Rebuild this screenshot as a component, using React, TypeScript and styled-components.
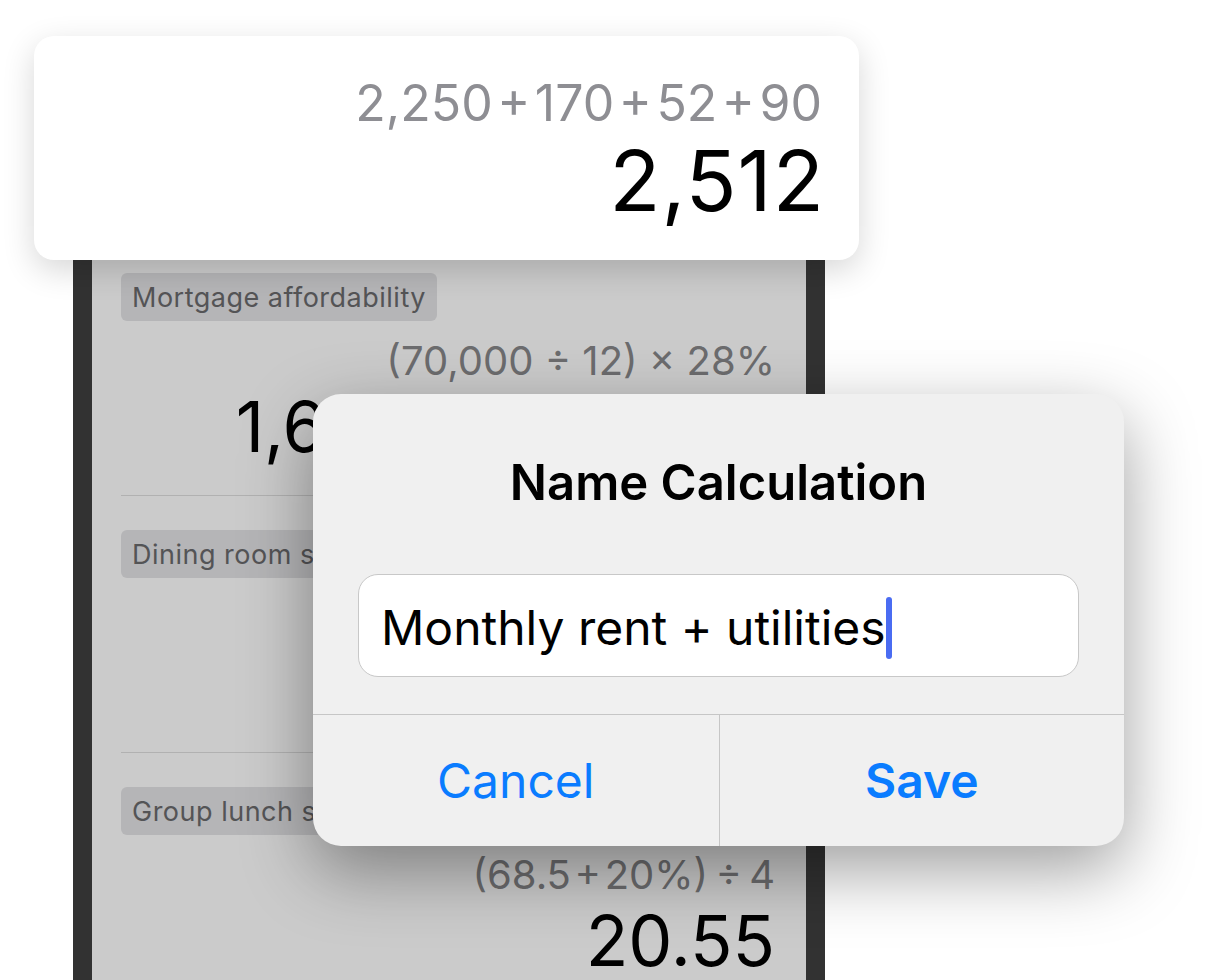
import styled, { createGlobalStyle } from "styled-components";

const GlobalStyle = createGlobalStyle`
  body {
    margin: 0;
    background: #ffffff;
    font-family: Inter, "Noto Sans", "Liberation Sans", sans-serif;
  }
`;

// narrow gaps around operators, like the calculator's own spacing
const H = "\u200A";
const T = "\u2009";

interface Calc {
  id: number;
  name: string;
  expression: string;
  result: string;
}

const calcs: Calc[] = [
  {
    id: 1,
    name: "Mortgage affordability",
    expression: "(70,000 ÷ 12) × 28%",
    result: "1,633.33333333",
  },
  {
    id: 2,
    name: "Dining room square footage",
    expression: "(14.5 × 12) + (10 × 8)",
    result: "254",
  },
  {
    id: 3,
    name: "Group lunch split",
    expression: `(68.5${H}+${H}20%)${T}÷${T}4`,
    result: "20.55",
  },
];

const Stage = styled.div`
  position: relative;
  width: 1206px;
  height: 980px;
  overflow: hidden;
  background: #ffffff;
`;

const Phone = styled.div`
  box-sizing: border-box;
  margin: 150px 0 0 73px;
  width: 752px;
  height: 830px;
  border-left: 19px solid #323232;
  border-right: 19px solid #323232;
  background: #cbcbcb;
  padding: 89px 34px 0 29px;
`;

const Row = styled.div`
  display: flex;
  flex-direction: column;
  padding: 34px 31px 29px 0;
  margin-right: -34px;
  border-bottom: 1px solid #b1b1b1;
`;

const Tag = styled.div`
  align-self: flex-start;
  height: 48px;
  display: flex;
  align-items: center;
  padding: 0 11px;
  border-radius: 6px;
  background: #b5b5b7;
  color: #545456;
  font-size: 27px;
  letter-spacing: 0.5px;
  white-space: nowrap;
`;

const Expression = styled.div<{ $size: number; $color: string }>`
  text-align: right;
  font-size: ${({ $size }) => $size}px;
  line-height: ${({ $size }) => Math.round($size * 1.2)}px;
  color: ${({ $color }) => $color};
  white-space: nowrap;
`;

const RowExpression = styled(Expression)`
  margin-top: 16px;
`;

const Result = styled.div<{ $size: number }>`
  text-align: right;
  font-size: ${({ $size }) => $size}px;
  line-height: ${({ $size }) => Math.round($size * 1.12)}px;
  color: #000000;
  white-space: nowrap;
`;

const RowResult = styled(Result)`
  margin-top: 3px;
`;

const Card = styled.div`
  position: absolute;
  left: 34px;
  top: 36px;
  width: 825px;
  height: 224px;
  box-sizing: border-box;
  padding: 37px 37px 0 0;
  border-radius: 20px;
  background: #ffffff;
  box-shadow: 0 10px 32px rgba(0, 0, 0, 0.16);
`;

const CardResult = styled(Result)`
  margin: 1px -3px 0 0;
  letter-spacing: 1px;
`;

const Dialog = styled.div`
  position: absolute;
  left: 313px;
  top: 394px;
  width: 811px;
  height: 452px;
  display: flex;
  flex-direction: column;
  border-radius: 28px;
  background: #f0f0f0;
  box-shadow: 0 24px 70px rgba(0, 0, 0, 0.38);
  overflow: hidden;
`;

const Title = styled.div`
  margin-top: 60px;
  text-align: center;
  font-size: 49px;
  line-height: 58px;
  font-weight: 600;
  color: #000000;
`;

const Field = styled.div`
  box-sizing: border-box;
  margin: 62px 45px 0;
  height: 103px;
  display: flex;
  align-items: center;
  padding: 4px 22px 0;
  background: #ffffff;
  border: 1.5px solid #c8c8c8;
  border-radius: 20px;
  font-size: 48px;
  line-height: 58px;
  color: #000000;
  white-space: nowrap;
`;

const Caret = styled.span`
  display: inline-block;
  width: 6px;
  height: 62px;
  border-radius: 3px;
  background: #4a6cf2;
`;

const Footer = styled.div`
  margin-top: 37px;
  flex: 1;
  display: grid;
  grid-template-columns: 1fr 1fr;
  border-top: 1px solid #c6c6c6;
`;

const Action = styled.div<{ $bold?: boolean }>`
  display: flex;
  align-items: center;
  justify-content: center;
  font-size: 48px;
  font-weight: ${({ $bold }) => ($bold ? 600 : 400)};
  color: #0a7cff;
  & + & {
    border-left: 1px solid #c6c6c6;
  }
`;

export default function App() {
  return (
    <Stage>
      <GlobalStyle />
      <Phone>
        {calcs.map((calc) => (
          <Row key={calc.id}>
            <Tag>{calc.name}</Tag>
            <RowExpression $size={40} $color="#6c6c6e">
              {calc.expression}
            </RowExpression>
            <RowResult $size={70}>{calc.result}</RowResult>
          </Row>
        ))}
      </Phone>

      <Card>
        <Expression $size={50} $color="#8e8e93">
          {`2,250${H}+${H}170${H}+${H}52${H}+${H}90`}
        </Expression>
        <CardResult $size={84}>2,512</CardResult>
      </Card>

      <Dialog>
        <Title>Name Calculation</Title>
        <Field>
          <span>Monthly rent + utilities</span>
          <Caret />
        </Field>
        <Footer>
          <Action>Cancel</Action>
          <Action $bold>Save</Action>
        </Footer>
      </Dialog>
    </Stage>
  );
}
